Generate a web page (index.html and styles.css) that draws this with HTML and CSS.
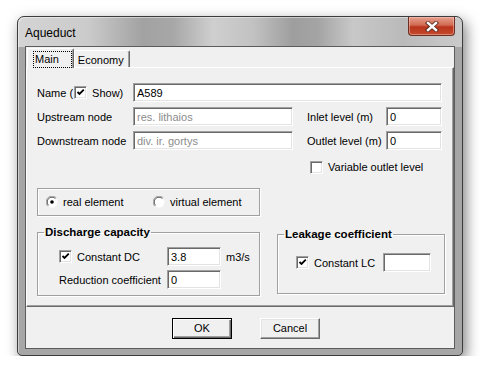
FILE: index.html
```html
<!DOCTYPE html>
<html lang="en">
<head>
<meta charset="UTF-8">
<title>Aqueduct</title>
<link rel="stylesheet" href="styles.css">
</head>
<body>

<div class="window">
  <div class="titlebar">
    <span class="title">Aqueduct</span>
    <div class="close">
      <svg width="14" height="11" viewBox="0 0 14 11">
        <path d="M3 2 L11 9 M11 2 L3 9" stroke="#5a2a22" stroke-width="4.2" stroke-linecap="square"/>
        <path d="M3 2 L11 9 M11 2 L3 9" stroke="#fff" stroke-width="2.4" stroke-linecap="square"/>
      </svg>
    </div>
  </div>

  <div class="client">
    <div class="tabs">
      <div class="tab active"><span class="focus">Main</span></div>
      <div class="tab">Economy</div>
    </div>

    <div class="panel">
      <div class="form-grid">
        <div class="name-label">
          Name (<span class="check on"></span><span class="show">Show)</span>
        </div>
        <input class="field wide" type="text" value="A589">

        <div class="label">Upstream node</div>
        <input class="field node muted" type="text" value="res. lithaios" readonly>
        <div class="label">Inlet level (m)</div>
        <input class="field" type="text" value="0">

        <div class="label">Downstream node</div>
        <input class="field node muted" type="text" value="div. ir. gortys" readonly>
        <div class="label">Outlet level (m)</div>
        <input class="field" type="text" value="0">

        <div class="variable">
          <span class="check"></span><span class="check-text">Variable outlet level</span>
        </div>
      </div>

      <div class="radio-box">
        <div class="radio-item first">
          <svg class="radio" width="12" height="12" viewBox="0 0 12 12">
            <circle cx="6" cy="6" r="5.5" fill="#fff"/>
            <path d="M1.8 10.2 A5.5 5.5 0 0 1 10.2 1.8" fill="none" stroke="#a0a0a0"/>
            <path d="M2.6 9.4 A4.5 4.5 0 0 1 9.4 2.6" fill="none" stroke="#555"/>
            <circle cx="6" cy="6" r="1.8" fill="#000"/>
          </svg>
          <span>real element</span>
        </div>
        <div class="radio-item">
          <svg class="radio" width="12" height="12" viewBox="0 0 12 12">
            <circle cx="6" cy="6" r="5.5" fill="#fff"/>
            <path d="M1.8 10.2 A5.5 5.5 0 0 1 10.2 1.8" fill="none" stroke="#a0a0a0"/>
            <path d="M2.6 9.4 A4.5 4.5 0 0 1 9.4 2.6" fill="none" stroke="#555"/>
          </svg>
          <span>virtual element</span>
        </div>
      </div>

      <div class="groups">
        <fieldset class="group discharge">
          <legend>Discharge capacity</legend>
          <div class="discharge-grid">
            <div class="check-row"><span class="check on"></span><span class="check-text">Constant DC</span></div>
            <input class="field small" type="text" value="3.8">
            <div class="unit">m3/s</div>
            <div class="label">Reduction coefficient</div>
            <input class="field small" type="text" value="0">
          </div>
        </fieldset>

        <fieldset class="group leakage">
          <legend>Leakage coefficient</legend>
          <div class="leakage-row">
            <div class="check-row"><span class="check on"></span><span class="check-text">Constant LC</span></div>
            <input class="field lc" type="text" value="">
          </div>
        </fieldset>
      </div>
    </div>

    <div class="buttons">
      <button class="btn default" type="button">OK</button>
      <button class="btn" type="button">Cancel</button>
    </div>
  </div>
</div>

</body>
</html>
```

FILE: styles.css
```css
body {
  margin: 0;
  background: #fff;
  font-family: "Liberation Sans", Arial, sans-serif;
  font-size: 11px;
  color: #000;
}
.window {
  width: 446px;
  height: 340px;
  margin: 16px 0 0 17px;
  box-sizing: border-box;
  border: 1px solid #3c3c3c;
  border-radius: 7px 7px 5px 5px;
  padding: 0 7px 6px 7px;
  display: flex;
  flex-direction: column;
  background:
    linear-gradient(to right, #d4d4d4 0, #cbcbcb 70px, #a2a2a2 125px, #a7a7a7 155px, #cfcfcf 195px, #c2c2c2 235px, #9e9e9e 275px, #a4a4a4 300px, #c8c8c8 335px, #bababa 385px, #cbcbcb 446px) top / 100% 30px no-repeat,
    #a6a6a6;
  box-shadow: 3px 5px 14px rgba(0, 0, 0, 0.5), inset 1px 1px 0 rgba(255, 255, 255, 0.45);
}
.titlebar {
  height: 29px;
  display: flex;
  justify-content: space-between;
  align-items: flex-start;
}
.title {
  font-size: 12px;
  line-height: 16px;
  padding-top: 8px;
  color: #000;
}
.close {
  width: 47px;
  height: 19px;
  box-sizing: border-box;
  border: 1px solid #6a2e24;
  border-top: none;
  border-radius: 0 0 4px 4px;
  background: linear-gradient(#e6a08e 0, #d26a52 45%, #b8341c 55%, #c44a2c 100%);
  display: flex;
  align-items: center;
  justify-content: center;
  box-shadow: inset 0 0 0 1px rgba(255, 210, 200, 0.45);
}
.close svg {
  display: block;
}
.client {
  flex: 1;
  display: flex;
  flex-direction: column;
  border: 1px solid #5c5c5c;
  background: #f0f0f0;
}
.tabs {
  height: 20px;
  display: flex;
  align-items: flex-end;
  padding-left: 1px;
}
.tab {
  height: 17px;
  box-sizing: border-box;
  border: 1px solid #fff;
  border-right-color: #696969;
  border-bottom: none;
  border-radius: 2px 2px 0 0;
  box-shadow: inset -1px 0 0 #a0a0a0;
  padding: 2px 5px 0 3px;
  line-height: 14px;
}
.tab.active {
  height: 20px;
  margin-bottom: -1px;
  padding: 2px 1px 0 5px;
  background: #f0f0f0;
  position: relative;
  z-index: 1;
}
.focus {
  display: inline-block;
  border: 1px dotted #000;
  padding: 0 12px 1px 1px;
  line-height: 14px;
}
.panel {
  height: 240px;
  box-sizing: border-box;
  border: 1px solid;
  border-color: #fff #696969 #696969 #fff;
  box-shadow: inset -1px -1px 0 #a0a0a0;
  padding: 15px 0 0 10px;
}
.form-grid {
  display: grid;
  grid-template-columns: 96px 174px 79px 56px;
  grid-template-rows: 19px 19px 19px 24px;
  row-gap: 5px;
  align-items: center;
}
.name-label {
  display: flex;
  align-items: center;
}
.name-label .check {
  margin-left: 1px;
}
.show {
  margin-left: 5px;
}
.field {
  height: 19px;
  box-sizing: border-box;
  border: 1px solid;
  border-color: #a0a0a0 #fff #fff #a0a0a0;
  box-shadow: inset 1px 1px 0 #696969, inset -1px -1px 0 #e3e3e3;
  background: #fff;
  padding: 1px 2px 0 3px;
  margin: 0;
  font: inherit;
  color: #000;
  outline: none;
  width: 56px;
}
.field.wide {
  grid-column: 2 / 5;
  width: 309px;
}
.field.node {
  width: 160px;
}
.field.muted {
  color: #8c8c8c;
}
.variable {
  grid-column: 3 / 5;
  display: flex;
  align-items: center;
  padding-left: 3px;
}
.check {
  display: inline-block;
  width: 13px;
  height: 13px;
  box-sizing: border-box;
  border: 1px solid;
  border-color: #a0a0a0 #fff #fff #a0a0a0;
  box-shadow: inset 1px 1px 0 #696969, inset -1px -1px 0 #e3e3e3;
  background: #fff;
  flex: none;
}
.check.on {
  background: #fff url("data:image/svg+xml,%3Csvg xmlns='http://www.w3.org/2000/svg' width='11' height='11'%3E%3Cpath d='M2.5 5 L4.5 7 L8.8 2.7' fill='none' stroke='%23000' stroke-width='1.8'/%3E%3C/svg%3E") no-repeat 0 0;
}
.check-text {
  margin-left: 5px;
}
.radio-box {
  width: 223px;
  height: 28px;
  box-sizing: border-box;
  margin-top: 9px;
  border: 1px solid #a0a0a0;
  box-shadow: inset 1px 1px 0 #fff, 1px 1px 0 #fff;
  display: flex;
  align-items: center;
  padding-left: 8px;
}
.radio-item {
  display: flex;
  align-items: center;
  gap: 5px;
}
.radio-item.first {
  width: 107px;
}
.radio {
  display: block;
}
.groups {
  display: flex;
  align-items: flex-start;
  margin-top: 9px;
}
.group {
  margin: 0;
  padding: 0;
  border: 1px solid #a0a0a0;
  box-shadow: inset 1px 1px 0 #fff, 1px 1px 0 #fff;
  box-sizing: border-box;
}
.group legend {
  font-weight: bold;
  font-size: 11.5px;
  line-height: 14px;
  padding: 0 1px;
  margin-left: 6px;
}
.discharge {
  width: 223px;
  height: 71px;
}
.leakage {
  width: 168px;
  height: 67px;
  margin: 2px 0 0 17px;
}
.discharge-grid {
  display: grid;
  grid-template-columns: 108px 54px auto;
  grid-template-rows: 19px 19px;
  row-gap: 4px;
  align-items: center;
  padding: 8px 0 0 21px;
}
.field.small {
  width: 54px;
}
.unit {
  padding-left: 5px;
}
.check-row {
  display: flex;
  align-items: center;
}
.leakage-row {
  display: flex;
  align-items: center;
  justify-content: space-between;
  width: 135px;
  padding: 12px 0 0 18px;
}
.field.lc {
  width: 48px;
}
.buttons {
  flex: 1;
  display: flex;
  align-items: center;
  padding-left: 146px;
  gap: 28px;
}
.btn {
  width: 60px;
  height: 21px;
  box-sizing: border-box;
  border: 1px solid;
  border-color: #fff #696969 #696969 #fff;
  box-shadow: inset -1px -1px 0 #a0a0a0, inset 1px 1px 0 #e3e3e3;
  background: #f0f0f0;
  font: inherit;
  color: #000;
  padding: 0;
  margin-top: 1px;
}
.btn.default {
  border: 1px solid #000;
  box-shadow: inset 1px 1px 0 #fff, inset -1px -1px 0 #696969, inset -2px -2px 0 #a0a0a0;
}
```
